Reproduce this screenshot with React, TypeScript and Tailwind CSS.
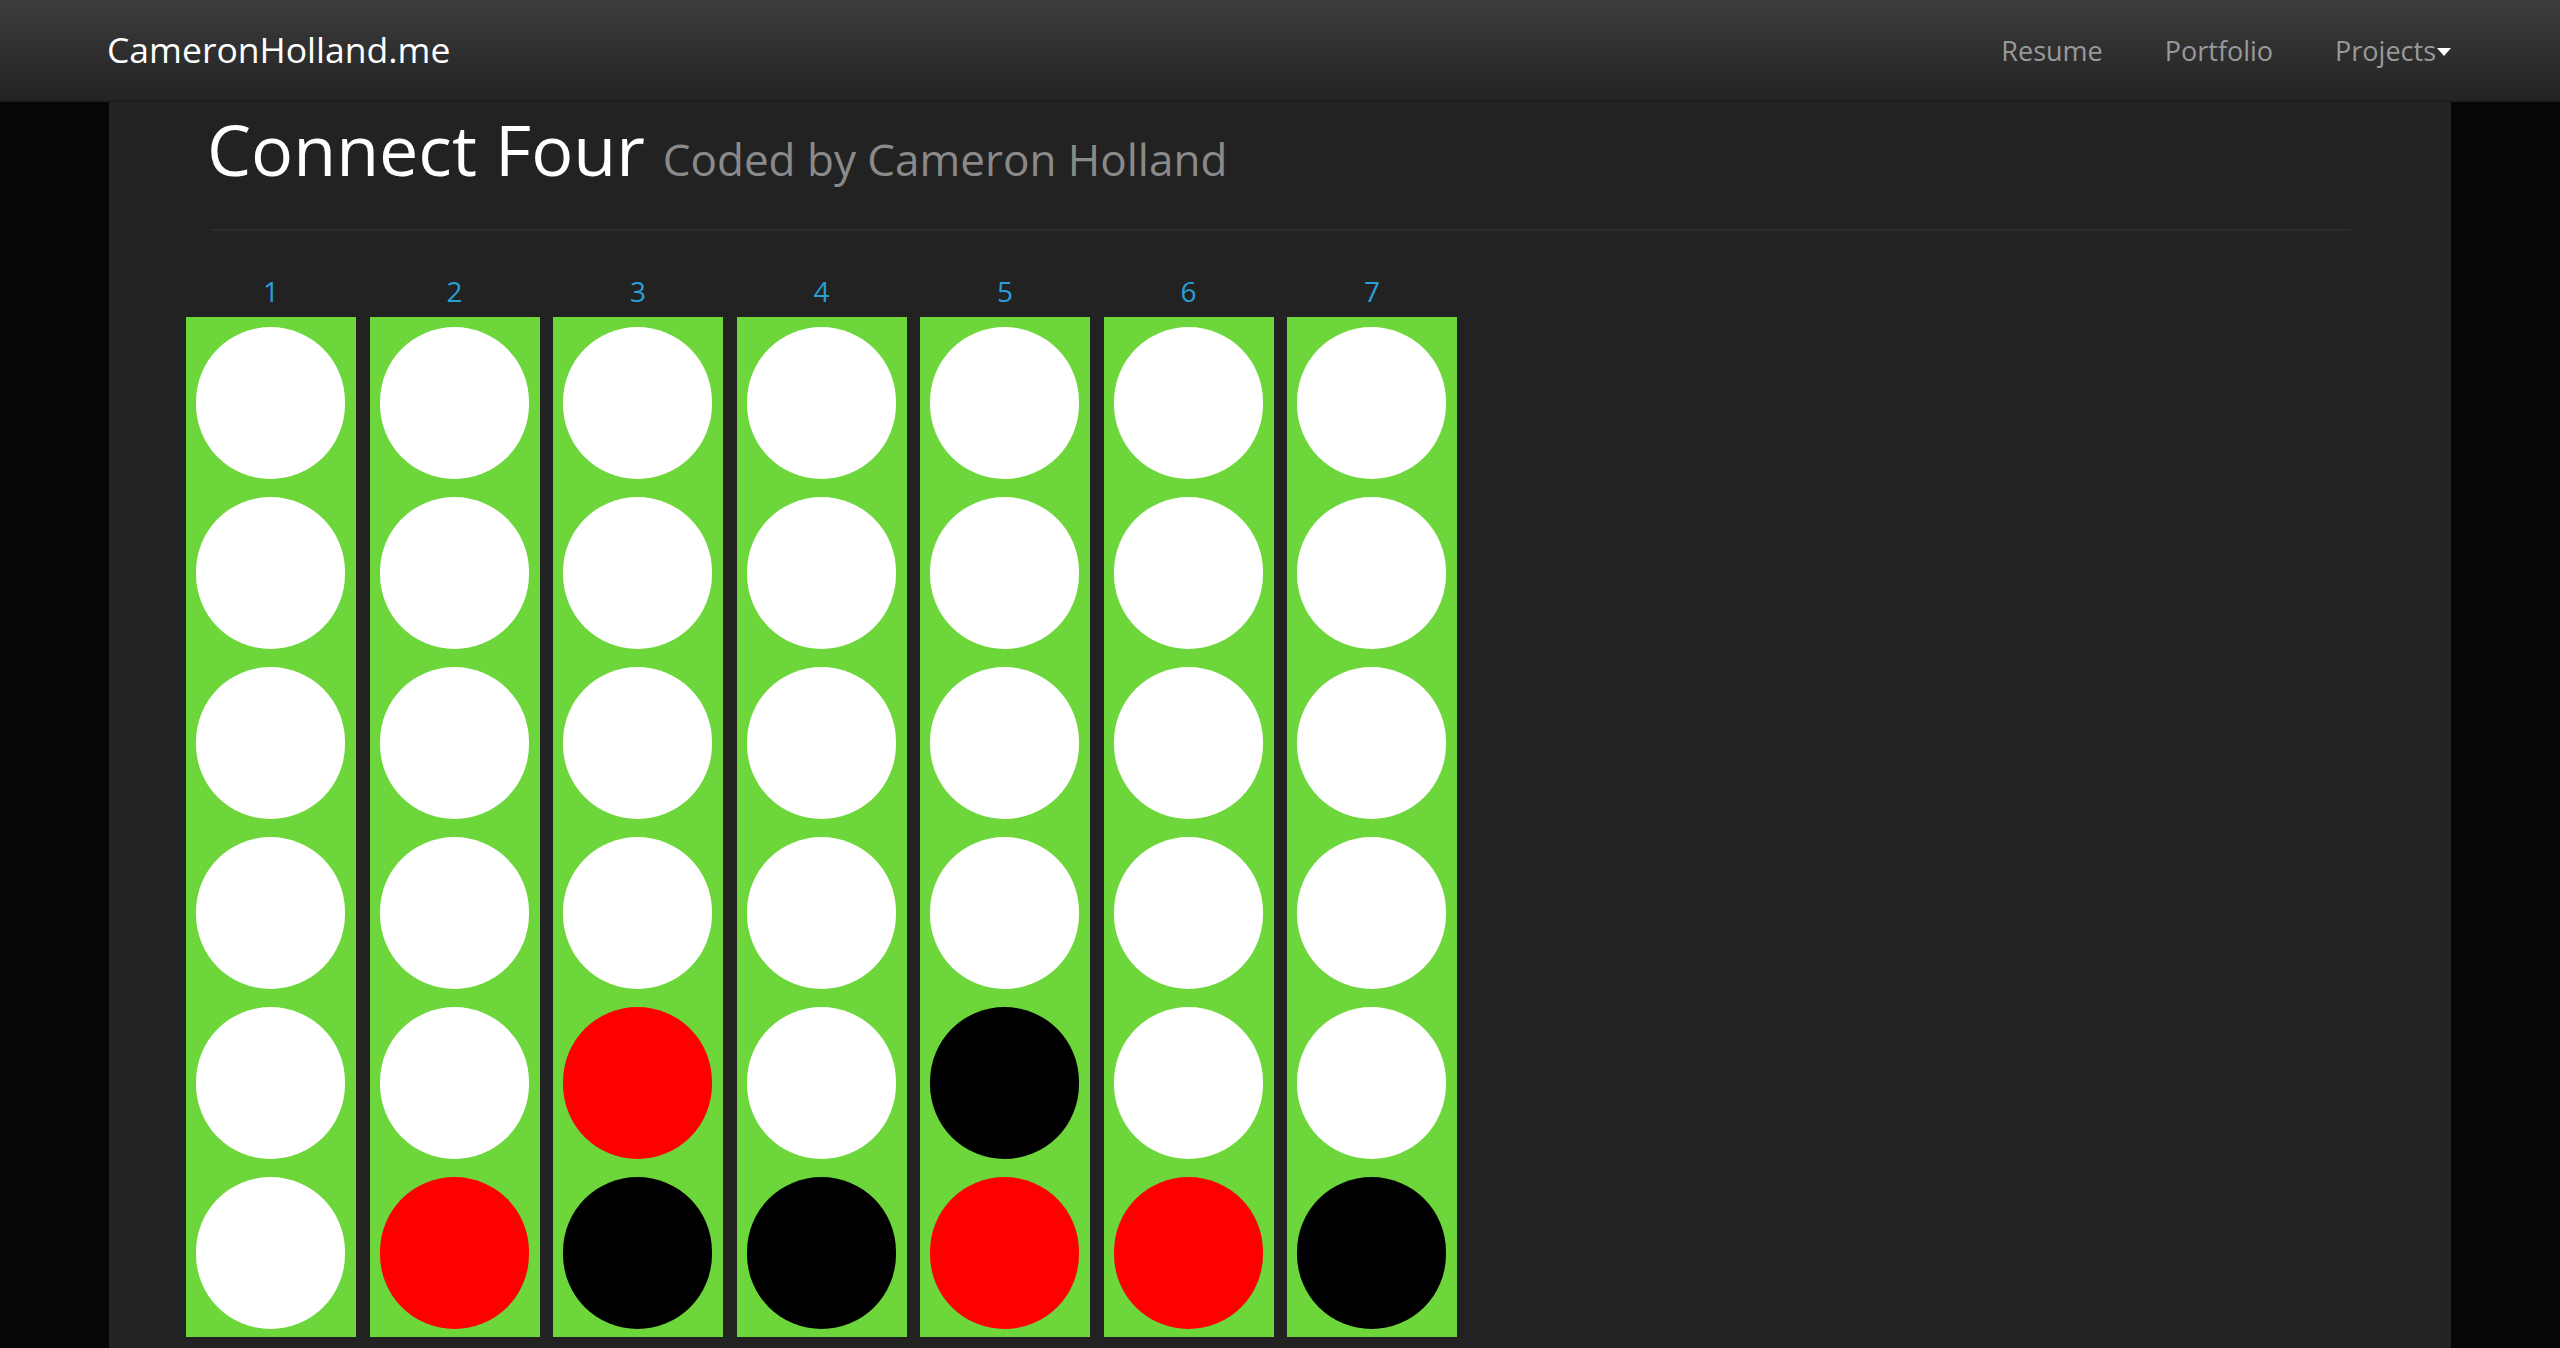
import React from "react";

type Disc = "w" | "r" | "b";

// board[row][col], row 0 = top
const board: Disc[][] = [
  ["w", "w", "w", "w", "w", "w", "w"],
  ["w", "w", "w", "w", "w", "w", "w"],
  ["w", "w", "w", "w", "w", "w", "w"],
  ["w", "w", "w", "w", "w", "w", "w"],
  ["w", "w", "r", "w", "b", "w", "w"],
  ["w", "r", "b", "b", "r", "r", "b"],
];

const discClass: Record<Disc, string> = {
  w: "bg-white",
  r: "bg-[#ff0000]",
  b: "bg-black",
};

function Navbar() {
  return (
    <nav className="h-[102px] border-b-2 border-[#1e1e1e] bg-linear-to-b from-[#3c3c3c] to-[#232323]">
      <div className="mx-auto flex h-full w-[2342px] items-center justify-between">
        <a className="-ml-[2px] text-[35.5px] leading-none text-white" href="#">
          CameronHolland.me
        </a>
        <ul className="flex items-center gap-[62px] text-[27px] leading-none text-[#999]">
          <li>Resume</li>
          <li>Portfolio</li>
          <li className="flex items-center">
            Projects
            <span className="ml-[1px] mt-[4px] h-0 w-0 border-x-[7.5px] border-t-[8px] border-x-transparent border-t-white" />
          </li>
        </ul>
      </div>
    </nav>
  );
}

function Column({ index }: { index: number }) {
  return (
    <div className="flex w-[170px] flex-col">
      <div className="h-[40px] text-center text-[28px] leading-[40px] text-[#2a9fd6]">
        {index + 1}
      </div>
      <div className="mt-[6px] flex flex-col bg-[#6dd63b]">
        {board.map((row, r) => (
          <div key={r} className="h-[170px] pl-[10px] pt-[10px]">
            <div className={`h-[152px] w-[149px] rounded-full ${discClass[row[index]]}`} />
          </div>
        ))}
      </div>
    </div>
  );
}

export default function App() {
  return (
    <div
      className="flex min-h-screen flex-col bg-[#060606]"
      style={{ fontFamily: '"Open Sans", "Noto Sans", sans-serif' }}
    >
      <Navbar />
      <main className="mx-auto w-[2342px] flex-1 bg-[#222]">
        <div className="pl-[98px] pr-[100px] pt-[12px]">
          <h1 className="flex items-baseline text-[70px] leading-[70px] text-white">
            Connect Four
            <small className="ml-[18px] text-[44px] text-[#8a8a8a]">Coded by Cameron Holland</small>
          </h1>
          <div className="ml-[4px] mt-[35px] h-[2px] bg-[#2c2c2c]" />
        </div>
        <div className="ml-[77px] mt-[40px] flex gap-[13.5px]">
          {[0, 1, 2, 3, 4, 5, 6].map((c) => (
            <Column key={c} index={c} />
          ))}
        </div>
      </main>
    </div>
  );
}
